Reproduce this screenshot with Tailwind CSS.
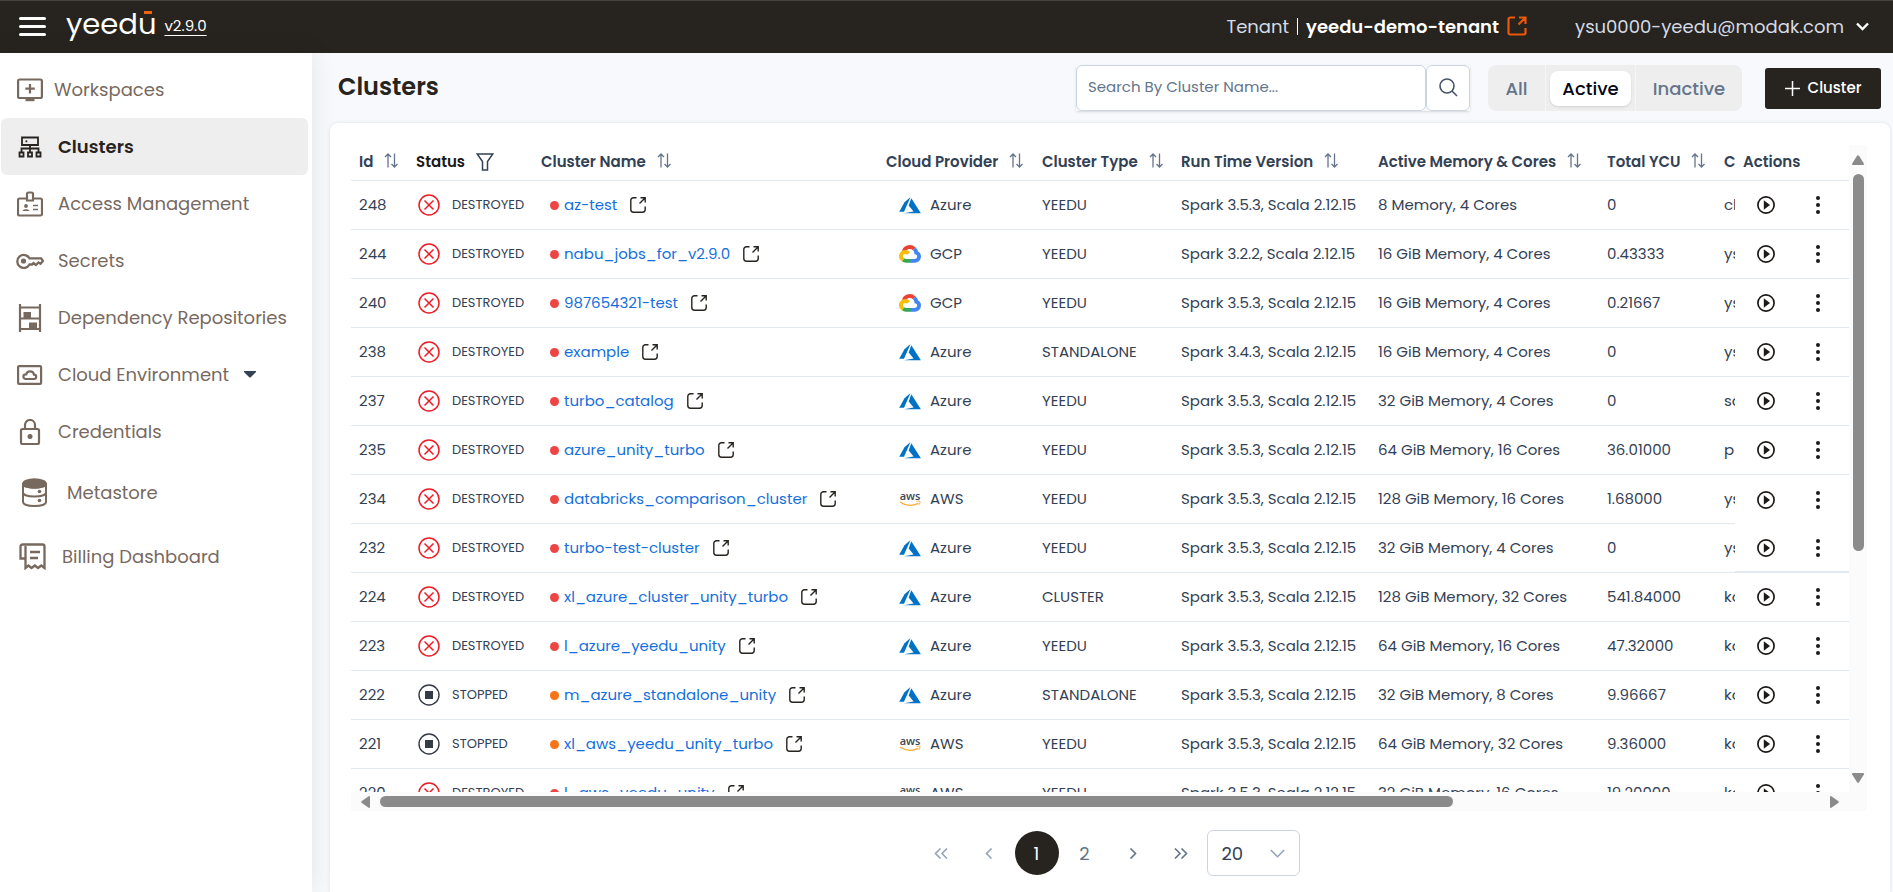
<!DOCTYPE html>
<html lang="en">

<head>
    <meta charset="utf-8" />
    <meta content="width=device-width, initial-scale=1.0" name="viewport" />
    <title>Clusters</title>
    <script src="https://cdn.jsdelivr.net/npm/@tailwindcss/browser@4"></script>
</head>

<body class="flex h-screen flex-col overflow-hidden bg-[#f8f9fc] font-[Poppins,Inter,sans-serif] text-[#334155]">

    <!-- Icon sprites -->
    <svg class="hidden" aria-hidden="true">
        <symbol id="sort" viewBox="0 0 14 15" fill="none" stroke="currentColor" stroke-width="1.3">
            <path d="M4 14.5V1M1 4l3-3 3 3M10.500 .5V14M7.500 11l3 3 3-3" />
        </symbol>
        <symbol id="external" viewBox="0 0 16 16" fill="none" stroke="currentColor" stroke-width="1.4">
            <path d="M6.500 .8H3.500A2.700 2.700 0 0 0 .8 3.500V12.500A2.700 2.700 0 0 0 3.500 15.200h9a2.700 2.700 0 0 0 2.700-2.700V9.500M10.500 .8h4.700V5.500M15 1 9.500 6.500" />
        </symbol>
        <symbol id="destroyed" viewBox="0 0 22 22" fill="none" stroke="#ee1c25" stroke-width="1.5">
            <circle cx="11" cy="11" r="10" />
            <path d="m6.500 6.500 9 9M15.500 6.500l-9 9" />
        </symbol>
        <symbol id="stopped" viewBox="0 0 22 22">
            <circle cx="11" cy="11" r="10" fill="none" stroke="#343a46" stroke-width="1.4" />
            <path d="M7 7h8v8H7z" fill="#343a46" />
        </symbol>
        <symbol id="play" viewBox="0 0 18 18">
            <circle cx="9" cy="9" r="8.100" fill="none" stroke="#1c1917" stroke-width="1.700" />
            <path d="M6.800 4.300 13 9l-6.200 4.700z" fill="#1c1917" />
        </symbol>
        <symbol id="dots" viewBox="0 0 6 18" fill="#1c1917">
            <circle cx="3" cy="2" r="2" />
            <circle cx="3" cy="9" r="2" />
            <circle cx="3" cy="16" r="2" />
        </symbol>
        <symbol id="azure" viewBox="0 0 22 18" fill="#0072c6">
            <path d="M11.500 1 5.500 6.200.2 15.700h4.800z" />
            <path d="m12.300 2.300-2.600 7.200 4.900 6.100-9.500 1.700H21.900z" />
        </symbol>
        <symbol id="gcp" viewBox="0 0 22 18" fill="none" stroke-width="3.800">
            <path d="M4.700 6.100A6.500 6.500 0 0 1 15.200 3.800" stroke="#ea4335" />
            <path d="M15.200 3.700c1.300 1.100 1.900 2.500 2.100 4.100 1.700.5 2.800 1.900 2.800 3.800 0 2.400-1.900 4.200-4.300 4.200H11" stroke="#4285f4" />
            <path d="M11.500 15.800H7a4.800 4.800 0 0 1-3-1" stroke="#34a853" />
            <path d="M4.100 14.800C2.600 13.900 1.900 12.800 1.900 11.300c0-2.500 1.900-4.300 4.400-4.300 1.400 0 2.400.5 3.200 1.500" stroke="#fbbc05" />
        </symbol>
        <symbol id="aws" viewBox="0 0 22 16">
            <text x="11" y="8.500" text-anchor="middle" font-family="Open Sans, sans-serif" font-size="11" font-weight="600" fill="#3c4654">aws</text>
            <path d="M.8 11c6 4 13 4.100 18.500 1.400" fill="none" stroke="#ffa733" stroke-width="1.300" />
            <path d="M17.500 10.500c1.300-.4 3-.4 3.500 0 .3.700-.3 2.400-1.200 3.400" fill="none" stroke="#ffa733" stroke-width="1" />
        </symbol>
    </svg>

    <!-- Header -->
    <header class="flex h-[53px] shrink-0 items-center border-t border-[#45433f] bg-[#27231e] pb-[2px] text-[18px] text-[#d5dbe5]">
        <button class="ml-[19px] flex w-[27px] flex-col gap-[5px]" aria-label="Toggle sidebar">
            <span class="h-[3px] w-full rounded bg-white"></span>
            <span class="h-[3px] w-full rounded bg-white"></span>
            <span class="h-[3px] w-full rounded bg-white"></span>
        </button>
        <a href="#" class="relative mb-1 ml-5 text-[29px] leading-[40px] text-white">yeedu<span class="absolute top-[7px] right-[4px] h-[3px] w-[8px] bg-[#f2620f]"></span></a>
        <a href="#" class="ml-2 text-[15px] text-white underline underline-offset-4">v2.9.0</a>
        <div class="ml-auto flex items-center">
            <span>Tenant</span>
            <span class="mx-2 h-[17px] w-px bg-white"></span>
            <span class="font-semibold text-white">yeedu-demo-tenant</span>
            <a href="#" class="ml-2 text-[#ea580c]" aria-label="Open tenant">
                <svg class="size-[20px]" viewBox="0 0 20 20" fill="none" stroke="currentColor" stroke-width="2.200">
                    <path d="M8 1.500H3.200A1.700 1.700 0 0 0 1.500 3.200v13.600a1.700 1.700 0 0 0 1.700 1.700h13.600a1.700 1.700 0 0 0 1.700-1.700V12M12 1.500h6.500V8M18 2l-6.500 6.500" />
                </svg>
            </a>
        </div>
        <button class="mr-6 ml-12 flex items-center gap-3">
            <span>ysu0000-yeedu@modak.com</span>
            <svg class="h-[9px] w-[13px]" viewBox="0 0 13 9" fill="none" stroke="#fff" stroke-width="2.400"><path d="m1 1.500 5.500 5.500L12 1.500" /></svg>
        </button>
    </header>

    <div class="flex min-h-0 flex-1">
        <!-- Sidebar -->
        <nav class="w-[312px] shrink-0 bg-white pt-2 pr-1 pl-px text-[18px] text-[#78695f] shadow-[0_0_24px_rgba(30,40,60,0.10)]">
            <a href="#" class="flex h-[57px] items-center gap-[11px] pl-4">
                <svg class="h-[24px] w-[26px]" viewBox="0 0 26 24" fill="none" stroke="currentColor" stroke-width="2.200">
                    <rect x="1.100" y="1.500" width="23.800" height="18.500" rx="1.500" />
                    <path d="M13 6v9.500M8.300 10.700h9.500" />
                    <path d="M8.500 21.700h9" stroke-width="3" />
                </svg>
                Workspaces
            </a>
            <a href="#" class="flex h-[57px] items-center gap-[15px] rounded-md bg-[#eeeeee] pl-4 font-semibold text-[#27231e]">
                <svg class="h-[24px] w-[26px]" viewBox="0 0 26 24" fill="none" stroke="currentColor" stroke-width="1.800">
                    <path d="M5 2.500h16v7.500H5zM13 10v7M4.500 17v-3.500h17V17" />
                    <path d="M2.500 17.500h4v4h-4zM11 17.500h4v4h-4zM19.500 17.500h4v4h-4z" />
                    <path d="M8.500 6.300h1.800" />
                </svg>
                Clusters
            </a>
            <a href="#" class="flex h-[57px] items-center gap-[15px] pl-4">
                <svg class="size-[26px]" viewBox="0 0 26 26" fill="none" stroke="currentColor" stroke-width="2.200">
                    <path d="M10 7.500H2.500A1.500 1.500 0 0 0 1 9v14a1.500 1.500 0 0 0 1.500 1.500h21A1.500 1.500 0 0 0 25 23V9a1.500 1.500 0 0 0-1.500-1.500H16" />
                    <path d="M10 3a1.500 1.500 0 0 1 1.500-1.500h3A1.500 1.500 0 0 1 16 3v6.500h-6z" />
                    <circle cx="9" cy="15" r="1.900" fill="currentColor" stroke="none" />
                    <path d="M5.500 20c.5-2.500 6.500-2.500 7 0z" fill="currentColor" stroke="none" />
                    <path d="M16 14.500h5M16 18.500h5" stroke-width="1.600" />
                </svg>
                Access Management
            </a>
            <a href="#" class="flex h-[57px] items-center gap-[14px] pl-[15px]">
                <svg class="h-[16px] w-[28px]" viewBox="0 0 28 16" fill="none" stroke="currentColor" stroke-width="2.300">
                    <path d="M13.500 5.300h11.700L27 8l-2.500 2.700-2-1.200L20 12l-2.500-2-1.500 1.500h-2.500A6.500 6.500 0 1 1 13.500 5.300z" />
                    <circle cx="7.500" cy="8" r="2.600" fill="currentColor" stroke="none" />
                </svg>
                Secrets
            </a>
            <a href="#" class="flex h-[57px] items-center gap-[15px] pl-4">
                <svg class="h-[28px] w-[26px]" viewBox="0 0 26 28" fill="none" stroke="currentColor" stroke-width="2.200">
                    <path d="M3 0v28M23 0v28M3 3.500h20M3 14.500h20M3 25h20" />
                    <path d="M6.500 8h7.500v6H6.500zM12 18.500h8v6h-8z" fill="currentColor" stroke="none" />
                </svg>
                Dependency Repositories
            </a>
            <a href="#" class="flex h-[57px] items-center gap-[15px] pl-4">
                <svg class="h-[20px] w-[26px]" viewBox="0 0 26 20" fill="none" stroke="currentColor" stroke-width="2.200">
                    <rect x="1.100" y="1.100" width="23" height="17.800" rx="1" />
                    <path d="M8.700 14h8.300a2.200 2.200 0 0 0 0-4.400 4 4 0 0 0-7.800-.2h-.5a2.300 2.300 0 0 0 0 4.600z" />
                </svg>
                Cloud Environment
                <svg class="h-[7px] w-[12px]" viewBox="0 0 12 7" fill="#334155"><path d="M0 0h12v1L6.500 6.500h-1L0 1z" /></svg>
            </a>
            <a href="#" class="flex h-[57px] items-center gap-[15px] pl-4">
                <svg class="h-[26px] w-[26px]" viewBox="0 0 26 26" fill="none" stroke="currentColor" stroke-width="2.200">
                    <rect x="4" y="10" width="18" height="15" rx="1.500" />
                    <path d="M8 10V6a5 5 0 0 1 10 0v4" />
                    <circle cx="13" cy="17.500" r="2.500" fill="currentColor" stroke="none" />
                </svg>
                Credentials
            </a>
            <a href="#" class="flex h-[64px] items-center gap-[20px] pl-[21px]">
                <svg class="h-[29px] w-[25px]" viewBox="0 0 25 29" fill="none" stroke="currentColor" stroke-width="2">
                    <path d="M1 5v19c0 2.500 5 4 11.500 4S24 26.500 24 24V5" />
                    <path d="M1 14.500c0 2.400 5 4 11.500 4s11.500-1.600 11.500-4" />
                    <ellipse cx="12.500" cy="5.500" rx="12.300" ry="5.300" fill="currentColor" stroke="none" />
                    <path d="M.2 5v3c3 3.300 21 3.300 24.600 0V5z" fill="currentColor" stroke="none" />
                    <circle cx="17.500" cy="13.500" r="1.800" fill="currentColor" stroke="none" />
                    <circle cx="17.500" cy="22.500" r="1.800" fill="currentColor" stroke="none" />
                </svg>
                Metastore
            </a>
            <a href="#" class="flex h-[64px] items-center gap-4 pl-[18px]">
                <svg class="h-[27px] w-[27px]" viewBox="0 0 27 27" fill="none" stroke="currentColor" stroke-width="2.300">
                    <path d="M6.500 15.500h-5V3.500a2 2 0 0 1 2-2h20a2 2 0 0 1 2 2V25l-3.200-2.500-3.300 2.500-3.200-2.500-3.300 2.500-3-2.500-3 2.500V3" />
                    <path d="M11 9h10M11 15h8" />
                </svg>
                Billing Dashboard
            </a>
        </nav>

        <main class="flex min-w-0 flex-1 flex-col pt-3 pr-[3px] pl-[18px]">
            <!-- Toolbar -->
            <div class="mr-[9px] mb-3 flex h-[46px] shrink-0 items-center">
                <h1 class="mb-[2px] ml-2 text-[24px] font-semibold text-[#27231e]">Clusters</h1>
                <div class="ml-auto flex h-full shadow-sm">
                    <input type="text" aria-label="Search By Cluster Name" placeholder="Search By Cluster Name..."
                        class="w-[350px] rounded-md border border-[#cbd5e1] bg-white px-[11px] pb-[2px] text-[15px] placeholder:text-[#64748b]" />
                    <button class="flex w-[44px] items-center justify-center rounded-md border border-[#cbd5e1] bg-white pb-[2px]" aria-label="Search">
                        <svg class="size-[19px]" viewBox="0 0 19 19" fill="none" stroke="#475569" stroke-width="1.600">
                            <circle cx="8" cy="8" r="7" />
                            <path d="m13 13 5 5" />
                        </svg>
                    </button>
                </div>
                <div class="ml-[18px] flex h-full items-center rounded-lg bg-[#eeeeee] text-[18px] font-medium text-[#64748b]">
                    <button class="h-full w-[58px] border-r border-[#f4f5f8]">All</button>
                    <div class="flex h-full w-[90px] items-center justify-center border-r border-[#f4f5f8]">
                        <button class="h-[35px] w-[81px] rounded-lg bg-white text-[#020617] shadow-sm">Active</button>
                    </div>
                    <button class="h-full w-[106px]">Inactive</button>
                </div>
                <button class="ml-[23px] flex h-[41px] w-[116px] items-center justify-center gap-2 rounded-[3px] bg-[#27231e] text-[15px] font-medium text-white">
                    <svg class="size-[15px]" viewBox="0 0 15 15" stroke="#fff" stroke-width="1.500"><path d="M7.500 0v15M0 7.500h15" /></svg>
                    Cluster
                </button>
            </div>

            <!-- Clusters card -->
            <section class="flex min-h-0 flex-1 flex-col rounded-t-lg bg-white pt-[22px] pr-[23px] pl-[21px] shadow-[0_0_4px_rgba(0,0,0,0.10)]">
                <div class="flex min-h-0 flex-1">
                    <div class="min-w-0 flex-1 overflow-hidden">
                        <table class="w-full table-fixed border-separate border-spacing-0 text-left text-[15px] whitespace-nowrap">
                            <colgroup>
                                <col class="w-[57px]" />
                                <col class="w-[125px]" />
                                <col />
                                <col class="w-[156px]" />
                                <col class="w-[139px]" />
                                <col class="w-[197px]" />
                                <col class="w-[229px]" />
                                <col class="w-[117px]" />
                                <col class="w-[19px]" />
                                <col class="w-[114px]" />
                            </colgroup>
                            <thead>
                                <tr id="table-head"></tr>
                            </thead>
                            <tbody id="table-body"></tbody>
                        </table>
                    </div>
                    <!-- Vertical scrollbar -->
                    <div class="flex w-[18px] shrink-0 flex-col items-center bg-[#fbfbfb] pt-[10px] pb-[9px]">
                        <svg class="h-[10px] w-[12px]" viewBox="0 0 12 10" fill="#8b8b8b"><path d="M5 .8Q6-.4 7 .8l5 8q0 1.200-1 1.200H1Q0 10 0 8.800z" /></svg>
                        <div class="mt-[9px] flex w-[11px] flex-1 flex-col">
                            <div class="h-[63%] rounded-full bg-[#8b8b8b]"></div>
                        </div>
                        <svg class="h-[10px] w-[12px]" viewBox="0 0 12 10" fill="#8b8b8b"><path d="M5 9.200q1 1.200 2 0l5-8Q12 0 11 0H1Q0 0 0 1.200z" /></svg>
                    </div>
                </div>
                <!-- Horizontal scrollbar -->
                <div class="flex h-[19px] shrink-0 items-center bg-[#fbfbfb] pr-[28px] pl-[10px]">
                    <svg class="h-[12px] w-[9px]" viewBox="0 0 9 12" fill="#8b8b8b"><path d="M.8 5Q-.4 6 .8 7L8 12q1 0 1-1V1Q9 0 8 0z" /></svg>
                    <div class="mx-[10px] flex-1">
                        <div class="h-[11px] w-[74.5%] rounded-full bg-[#8b8b8b]"></div>
                    </div>
                    <svg class="h-[12px] w-[9px]" viewBox="0 0 9 12" fill="#8b8b8b"><path d="M8.200 5q1.200 1 0 2L1 12q-1 0-1-1V1Q0 0 1 0z" /></svg>
                </div>

                <!-- Pagination -->
                <div class="flex shrink-0 items-center justify-center gap-1 pt-[19px] pb-4 text-[18px] text-[#64748b]">
                    <button class="flex size-[44px] items-center justify-center text-[#94a3b8]" aria-label="First page">
                        <svg class="h-[11px] w-[14px]" viewBox="0 0 14 11" fill="none" stroke="currentColor" stroke-width="1.600"><path d="M6.500.5l-5 5 5 5M13 .5l-5 5 5 5" /></svg>
                    </button>
                    <button class="flex size-[44px] items-center justify-center text-[#94a3b8]" aria-label="Previous page">
                        <svg class="h-[11px] w-[8px]" viewBox="0 0 8 11" fill="none" stroke="currentColor" stroke-width="1.600"><path d="M6.500.5l-5 5 5 5" /></svg>
                    </button>
                    <button class="size-[44px] rounded-full bg-[#27231e] text-white">1</button>
                    <button class="size-[44px]">2</button>
                    <button class="flex size-[44px] items-center justify-center" aria-label="Next page">
                        <svg class="h-[11px] w-[8px]" viewBox="0 0 8 11" fill="none" stroke="currentColor" stroke-width="1.600"><path d="m1.500.5 5 5-5 5" /></svg>
                    </button>
                    <button class="flex size-[44px] items-center justify-center" aria-label="Last page">
                        <svg class="h-[11px] w-[14px]" viewBox="0 0 14 11" fill="none" stroke="currentColor" stroke-width="1.600"><path d="m1 .5 5 5-5 5M7.500.5l5 5-5 5" /></svg>
                    </button>
                    <div class="relative">
                        <select aria-label="Rows per page" class="h-[46px] w-[93px] appearance-none rounded-md border border-[#cbd5e1] bg-white pl-[14px] text-[#334155]">
                            <option>10</option>
                            <option selected>20</option>
                            <option>50</option>
                        </select>
                        <svg class="pointer-events-none absolute top-[19px] right-[15px] h-[9px] w-[15px]" viewBox="0 0 15 9" fill="none" stroke="#94a3b8" stroke-width="1.600"><path d="m.8 1 6.700 6.700L14.200 1" /></svg>
                    </div>
                </div>
            </section>
        </main>
    </div>

    <script>
        const columns = ["Id", "Status", "Cluster Name", "Cloud Provider", "Cluster Type", "Run Time Version", "Active Memory & Cores", "Total YCU", "C", "Actions"];

        // id, status, name, provider, type, spark, memory & cores, ycu, created by
        const clusters = [
            [248, "DESTROYED", "az-test", "Azure", "YEEDU", "3.5.3", "8 Memory, 4 Cores", "0", "cl"],
            [244, "DESTROYED", "nabu_jobs_for_v2.9.0", "GCP", "YEEDU", "3.2.2", "16 GiB Memory, 4 Cores", "0.43333", "ys"],
            [240, "DESTROYED", "987654321-test", "GCP", "YEEDU", "3.5.3", "16 GiB Memory, 4 Cores", "0.21667", "ys"],
            [238, "DESTROYED", "example", "Azure", "STANDALONE", "3.4.3", "16 GiB Memory, 4 Cores", "0", "ys"],
            [237, "DESTROYED", "turbo_catalog", "Azure", "YEEDU", "3.5.3", "32 GiB Memory, 4 Cores", "0", "sa"],
            [235, "DESTROYED", "azure_unity_turbo", "Azure", "YEEDU", "3.5.3", "64 GiB Memory, 16 Cores", "36.01000", "p"],
            [234, "DESTROYED", "databricks_comparison_cluster", "AWS", "YEEDU", "3.5.3", "128 GiB Memory, 16 Cores", "1.68000", "ys"],
            [232, "DESTROYED", "turbo-test-cluster", "Azure", "YEEDU", "3.5.3", "32 GiB Memory, 4 Cores", "0", "ys"],
            [224, "DESTROYED", "xl_azure_cluster_unity_turbo", "Azure", "CLUSTER", "3.5.3", "128 GiB Memory, 32 Cores", "541.84000", "ko"],
            [223, "DESTROYED", "l_azure_yeedu_unity", "Azure", "YEEDU", "3.5.3", "64 GiB Memory, 16 Cores", "47.32000", "ko"],
            [222, "STOPPED", "m_azure_standalone_unity", "Azure", "STANDALONE", "3.5.3", "32 GiB Memory, 8 Cores", "9.96667", "ko"],
            [221, "STOPPED", "xl_aws_yeedu_unity_turbo", "AWS", "YEEDU", "3.5.3", "64 GiB Memory, 32 Cores", "9.36000", "ko"],
            [220, "DESTROYED", "l_aws_yeedu_unity", "AWS", "YEEDU", "3.5.3", "32 GiB Memory, 16 Cores", "19.20000", "ko"]
        ];

        const cell = "h-[49px] overflow-hidden border-b border-[#e2e8f0] py-0 pr-0 pl-2";

        function headIcon(name) {
            if (name === "Actions" || name === "C") return "";
            if (name === "Status") {
                return `<svg class="mb-[2px] h-[18px] w-[18px]" viewBox="0 0 18 18" fill="none" stroke="#334155" stroke-width="1.500"><path d="M1.200 1h15.600l-5.300 7.500V17h-5V8.500z" /></svg>`;
            }
            return `<svg class="mb-1 h-[15px] w-[14px] text-[#64748b]"><use href="#sort" /></svg>`;
        }

        document.getElementById("table-head").innerHTML = columns.map(name => `
            <th class="h-[36px] overflow-hidden border-b border-[#e2e8f0] py-0 pr-0 pl-2 font-semibold ${name === "Status" ? "text-[#1c1917]" : ""}">
                <div class="flex items-center gap-[11px]">${name.replace("&", "&amp;")}${headIcon(name)}</div>
            </th>`).join("");

        // The pinned column drops its line under 234 and doubles the next one
        function actionBorder(id) {
            if (id === 234) return "border-b-0";
            return id === 232 ? "border-b-2" : "border-b";
        }

        document.getElementById("table-body").innerHTML = clusters.map(([id, status, name, provider, type, spark, memory, ycu, owner]) => `
            <tr>
                <td class="${cell}">${id}</td>
                <td class="${cell}">
                    <div class="flex items-center gap-3 pl-[2px] text-[13px]">
                        <svg class="size-[22px]"><use href="#${status.toLowerCase()}" /></svg>${status}
                    </div>
                </td>
                <td class="${cell}">
                    <div class="flex items-center pl-[9px]">
                        <span class="mr-[5px] size-[9px] rounded-full ${status === "STOPPED" ? "bg-[#f97316]" : "bg-[#ef4444]"}"></span>
                        <a href="#" class="text-[#146fdc]">${name}</a>
                        <a href="#" class="ml-[13px] text-[#27231e]" aria-label="Open ${name}"><svg class="size-[16px]"><use href="#external" /></svg></a>
                    </div>
                </td>
                <td class="${cell}">
                    <div class="flex items-center gap-[9px] pl-[13px]">
                        <svg class="h-[18px] w-[22px]"><use href="#${provider.toLowerCase()}" /></svg>${provider}
                    </div>
                </td>
                <td class="${cell}">${type}</td>
                <td class="${cell}">Spark ${spark}, Scala 2.12.15</td>
                <td class="${cell}">${memory}</td>
                <td class="${cell}">${ycu}</td>
                <td class="${cell}">${owner}</td>
                <td class="h-[49px] ${actionBorder(id)} border-[#e2e8f0] bg-white p-0">
                    <div class="flex items-center gap-[40px] pl-[22px]">
                        <button aria-label="Start ${name}"><svg class="size-[18px]"><use href="#play" /></svg></button>
                        <button aria-label="More actions for ${name}"><svg class="h-[18px] w-[6px]"><use href="#dots" /></svg></button>
                    </div>
                </td>
            </tr>`).join("");
    </script>
</body>

</html>
